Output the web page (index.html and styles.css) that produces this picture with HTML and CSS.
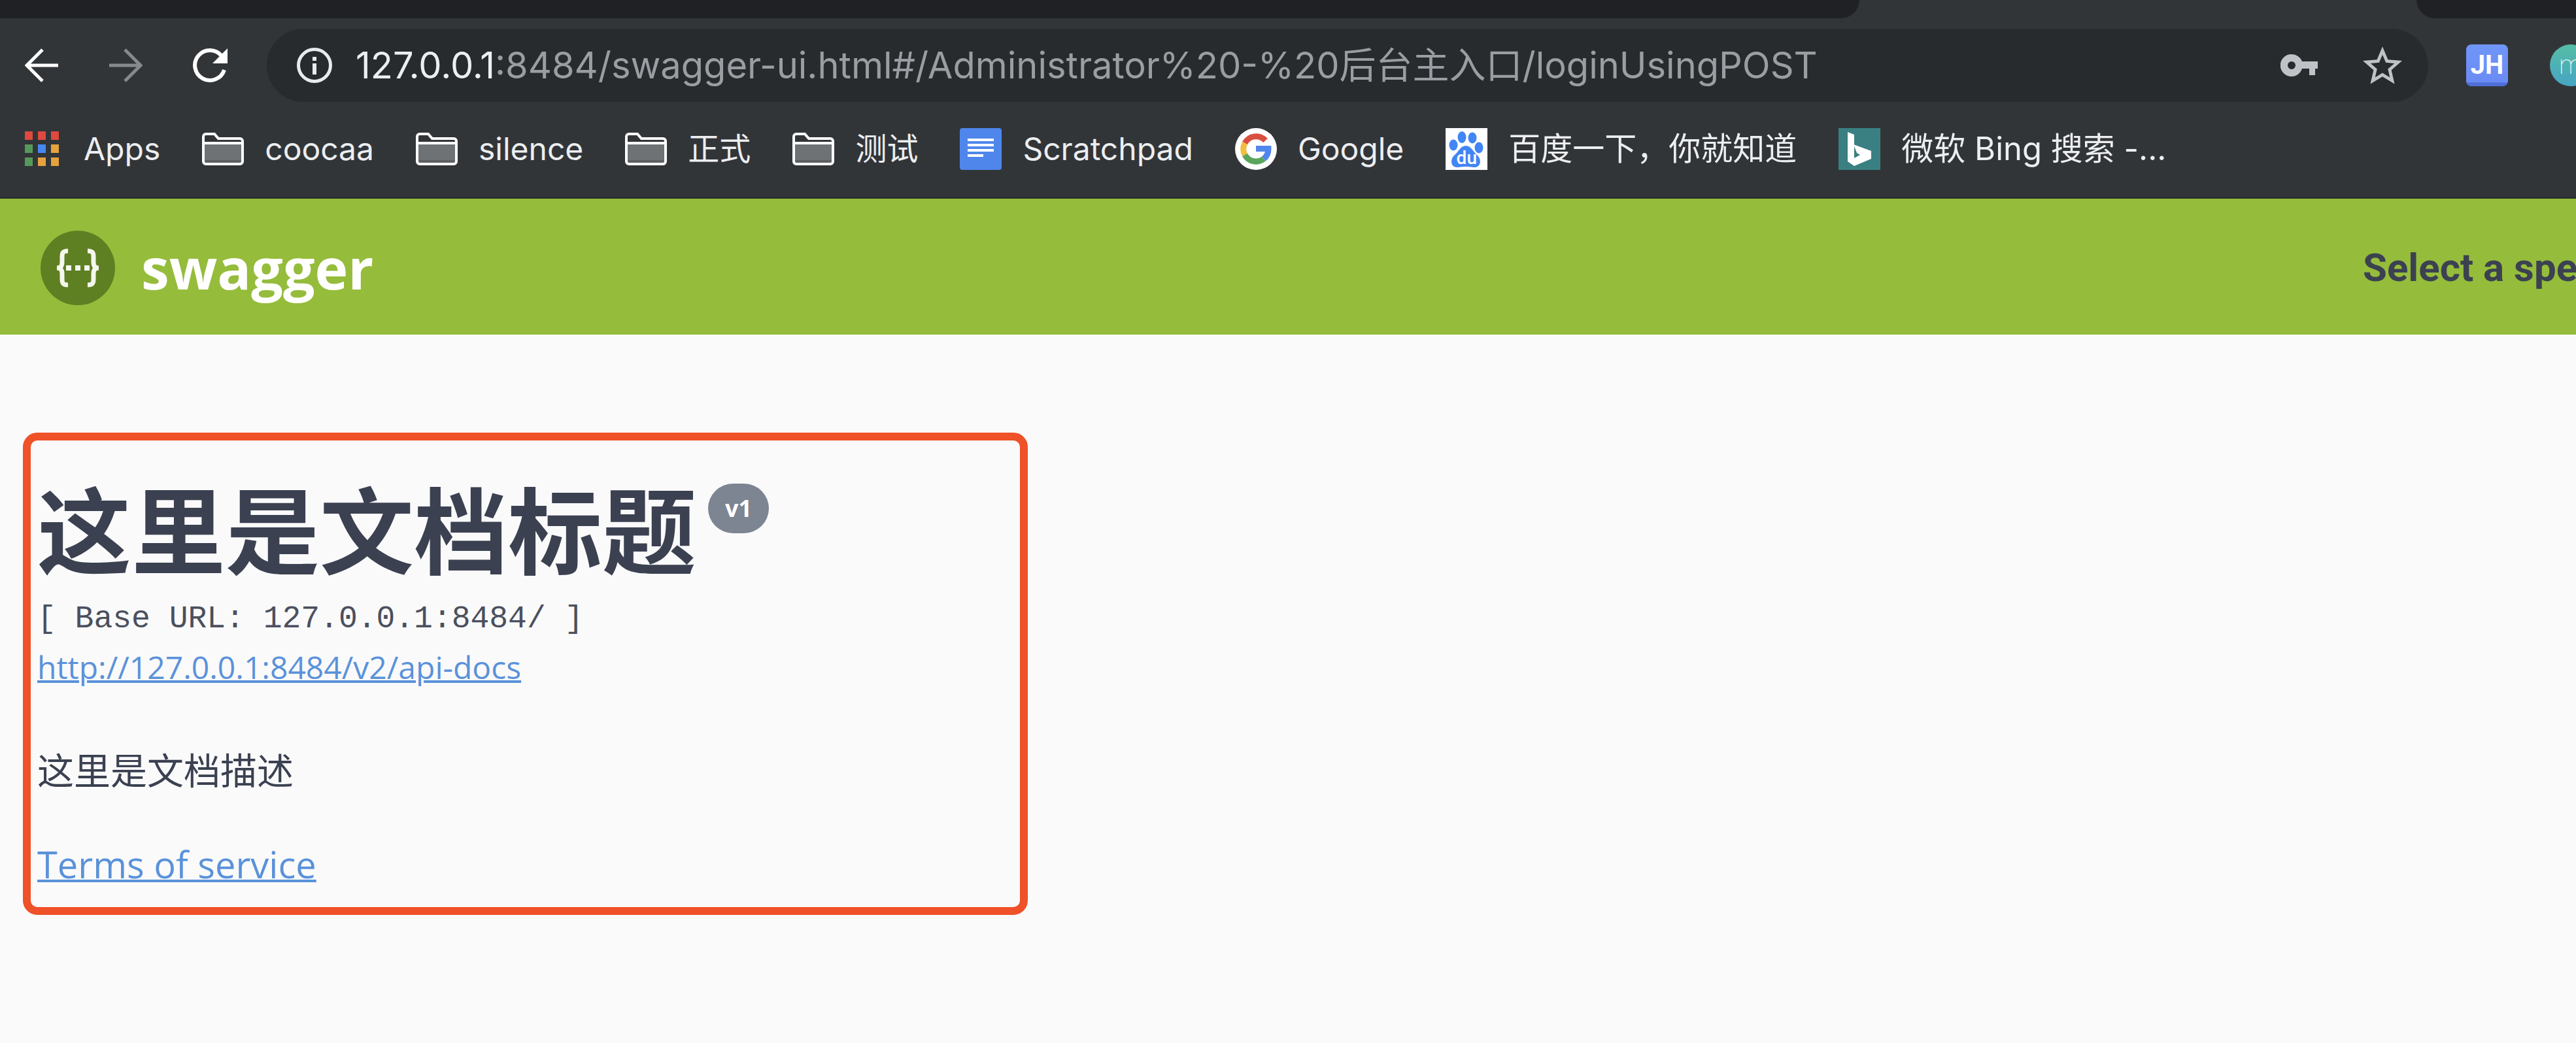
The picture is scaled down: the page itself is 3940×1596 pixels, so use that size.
FILE: index.html
```html
<!DOCTYPE html>
<html lang="zh-CN">
<head>
<meta charset="utf-8">
<title>Swagger UI</title>
<link rel="stylesheet" href="styles.css">
</head>
<body>
<svg width="0" height="0" class="defs" aria-hidden="true">
  <symbol id="folder" viewBox="0 0 64 50">
    <path d="M2 6a4 4 0 0 1 4-4h13l6 7h33a4 4 0 0 1 4 4v31a4 4 0 0 1-4 4H6a4 4 0 0 1-4-4z" fill="#323538"/>
    <path d="M3 17h58v30H3z" fill="#6f7274"/>
    <path d="M3 42h58v5H3z" fill="#5e6062"/>
    <path d="M2 6a4 4 0 0 1 4-4h13l6 7h33a4 4 0 0 1 4 4v31a4 4 0 0 1-4 4H6a4 4 0 0 1-4-4zM3 16h58" fill="none" stroke="#fff" stroke-width="4"/>
  </symbol>
</svg>
<header class="browser">
  <div class="tabs">
    <div class="tabs-before"></div>
    <div class="tab-active"></div>
    <div class="tabs-after"></div>
  </div>
  <div class="toolbar">
    <nav class="nav">
      <button type="button" aria-label="Back"><svg width="52" height="52" viewBox="0 0 52 52"><path d="M51 26H4M27 2L3 26l24 24" fill="none" stroke="#fff" stroke-width="5"/></svg></button>
      <button type="button" aria-label="Forward"><svg width="52" height="52" viewBox="0 0 52 52"><path d="M1 26h47M25 2l24 24-24 24" fill="none" stroke="#87898b" stroke-width="5"/></svg></button>
      <button type="button" aria-label="Reload"><svg width="54" height="54" viewBox="0 0 54 54"><path d="M45 12.500A23 23 0 1 0 49 34" fill="none" stroke="#fff" stroke-width="6"/><path d="M54 1v23H31z" fill="#fff"/></svg></button>
    </nav>
    <div class="omnibox">
      <svg width="54" height="54" viewBox="0 0 54 54"><circle cx="27" cy="27" r="24.500" fill="none" stroke="#e8eaed" stroke-width="5"/><path d="M24 14h6v6h-6zM24 24h6v17h-6z" fill="#e8eaed"/></svg>
      <div class="url"><b>127.0.0.1</b>:8484/swagger-ui.html#/Administrator%20-%20后台主入口/loginUsingPOST</div>
      <button type="button" aria-label="Passwords"><svg width="58" height="34" viewBox="0 0 58 34"><path d="M17 0a17 17 0 1 0 16 22h11v10h9V22h4V11H33A17 17 0 0 0 17 0zm0 11a6 6 0 1 1 0 12 6 6 0 0 1 0-12z" fill="#bfc2c6"/></svg></button>
      <button type="button" aria-label="Bookmark"><svg width="60" height="60" viewBox="0 0 24 24"><path d="M24 9.240l-8.630-.740L12 .500 8.630 8.500 0 9.240l6.550 5.680L4.580 23.400 12 18.900l7.420 4.500-1.970-8.480zM12 16.640l-4.510 2.720 1.200-5.130-3.980-3.450 5.250-.460L12 5.480l2.050 4.840 5.250.460-3.980 3.450 1.200 5.130z" fill="#bfc2c6"/></svg></button>
    </div>
    <div class="extensions">
      <button type="button" class="ext-jh">JH</button>
      <button type="button" class="ext-m">m</button>
    </div>
  </div>
  <nav class="bookmarks">
    <a href="#"><svg class="apps" width="52" height="54" viewBox="0 0 52 54"><g fill="#e0493e"><path d="M0 0h12v13H0zM20 0h12v13H20zM40 0h12v13H40z"/></g><path d="M0 20h12v13H0zM0 40h12v13H0z" fill="#569a5b"/><path d="M20 20h12v13H20z" fill="#4688f1"/><path d="M40 20h12v13H40zM20 40h12v13H20zM40 40h12v13H40z" fill="#e6a33c"/></svg>Apps</a>
    <a href="#"><svg width="64" height="50"><use href="#folder"/></svg>coocaa</a>
    <a href="#"><svg width="64" height="50"><use href="#folder"/></svg>silence</a>
    <a href="#"><svg width="64" height="50"><use href="#folder"/></svg>正式</a>
    <a href="#"><svg width="64" height="50"><use href="#folder"/></svg>测试</a>
    <a href="#"><svg width="64" height="64" viewBox="0 0 64 64"><rect width="64" height="64" rx="4" fill="#4f86ec"/><path d="M12 18h40M12 26h40M12 34h40M12 42h24" stroke="#fff" stroke-width="4"/></svg>Scratchpad</a>
    <a href="#"><svg width="64" height="64" viewBox="0 0 64 64"><circle cx="32" cy="32" r="32" fill="#fff"/><g fill="none" stroke-width="9"><path d="M46.500 19A19.500 19.500 0 0 0 15 23" stroke="#d94f3f"/><path d="M15 23a19.500 19.500 0 0 0 0 18" stroke="#f2bd42"/><path d="M15 41a19.500 19.500 0 0 0 29 6" stroke="#58a55c"/><path d="M44 47a19.500 19.500 0 0 0 7-15.500H32" stroke="#5186ec"/></g></svg>Google</a>
    <a href="#" class="zh"><span class="baidu"><svg width="64" height="64" viewBox="0 0 64 64"><rect width="64" height="64" fill="#fff"/><g fill="#4285f4"><ellipse cx="25" cy="14" rx="6.500" ry="9"/><ellipse cx="41" cy="15" rx="6.500" ry="8.500"/><ellipse cx="12" cy="26" rx="6.500" ry="8.500"/><ellipse cx="51" cy="30" rx="6.500" ry="8.500"/><path d="M31 27c8 0 11 9 17 14 7 6 7 18-3 19-6 0-8-1-14-1s-9 1-14 1c-10-1-10-13-3-19 6-5 9-14 17-14z"/></g></svg><span>du</span></span>百度一下，你就知道</a>
    <a href="#" class="zh"><svg width="64" height="64" viewBox="0 0 64 64"><rect width="64" height="64" fill="#3a8082"/><path d="M14 6l10 4v36l9-5-5-3-5-13 27 10v12L24 58l-10-7z" fill="#fff"/></svg>微软 Bing 搜索 -...</a>
  </nav>
</header>
<div class="topbar">
  <a class="brand" href="#">
    <svg width="114" height="116" viewBox="0 0 114 116"><circle cx="57" cy="58" r="57" fill="#5f7f23"/><g fill="none" stroke="#f4f7ee" stroke-width="7"><path d="M42 32c-8 0-9 3-9 9v8c0 6-2 9-8 9 6 0 8 3 8 9v8c0 6 1 9 9 9"/><path d="M72 32c8 0 9 3 9 9v8c0 6 2 9 8 9-6 0-8 3-8 9v8c0 6-1 9-9 9"/></g><path d="M39 54h8v8h-8zM53 54h8v8h-8zM67 54h8v8h-8z" fill="#f4f7ee"/></svg>
    <span>swagger</span>
  </a>
  <div class="spec">Select a spe</div>
</div>
<main class="page">
  <section class="info">
    <h1>这里是文档标题<span class="version">v1</span></h1>
    <pre class="base">[ Base URL: 127.0.0.1:8484/ ]</pre>
    <a class="docs" href="#">http://127.0.0.1:8484/v2/api-docs</a>
    <p>这里是文档描述</p>
    <a class="terms" href="#">Terms of service</a>
  </section>
</main>
</body>
</html>
```
FILE: styles.css
```css
* { box-sizing: border-box; }

body {
  margin: 0;
  background: #fafafa;
  color: #3b4151;
  font-family: "Open Sans", "Noto Sans CJK SC", sans-serif;
  overflow-x: hidden;
}

.defs { position: absolute; }
svg { display: block; flex: none; }

button {
  padding: 0;
  border: 0;
  background: none;
  flex: none;
}

/* Browser chrome */
.browser {
  background: #323538;
  border-bottom: 2px solid #2a2c2c;
  font-family: Inter, "Noto Sans CJK SC", sans-serif;
  overflow: hidden;
}

.tabs { display: flex; height: 28px; }
.tabs-before { flex: 1; background: #202124; border-bottom-right-radius: 28px; }
.tab-active { width: 852px; }
.tabs-after { width: 244px; background: #202124; border-bottom-left-radius: 28px; }

.toolbar {
  display: flex;
  align-items: center;
  gap: 58px;
  padding: 16px 0 0 38px;
}
.nav { display: flex; align-items: center; gap: 76px; padding-right: 2px; }

.omnibox {
  flex: 1;
  min-width: 0;
  display: flex;
  align-items: center;
  gap: 36px;
  height: 112px;
  padding: 0 40px 0 46px;
  border-radius: 56px;
  background: #282b2e;
}
.omnibox button + button { margin-left: 32px; }
.url {
  flex: 1;
  color: #9a9da1;
  font-size: 56px;
  line-height: 72px;
  white-space: nowrap;
  overflow: hidden;
}
.url b { color: #eceef0; font-weight: 400; }

.extensions { display: flex; gap: 64px; }
.ext-jh, .ext-m { width: 64px; height: 64px; color: #fff; text-align: center; }
.ext-jh {
  border-radius: 8px;
  background: linear-gradient(#7096f8, #6a8bf5 90%, #4e6fd8 92%);
  font: 700 40px/64px Roboto, sans-serif;
}
.ext-m {
  margin-right: -24px;
  border-radius: 50%;
  background: linear-gradient(#55bda5, #47a5c4);
  font: 100 40px/64px Roboto, sans-serif;
}

.bookmarks {
  display: flex;
  align-items: center;
  gap: 64px;
  height: 146px;
  padding: 0 0 2px 38px;
}
.bookmarks a {
  display: flex;
  align-items: center;
  gap: 32px;
  color: #eceef0;
  font-size: 48px;
  line-height: 64px;
  text-decoration: none;
  white-space: nowrap;
}
.bookmarks .zh { font-size: 49px; }
.apps { margin-right: 6px; }
.baidu { position: relative; }
.baidu span {
  position: absolute;
  inset: 32px 0 0;
  color: #fff;
  font: 500 28px/28px Roboto, sans-serif;
  text-align: center;
}

/* Swagger top bar */
.topbar {
  display: flex;
  align-items: center;
  justify-content: space-between;
  height: 208px;
  padding: 4px 0 0 62px;
  background: #95bc3b;
}
.brand {
  display: flex;
  align-items: center;
  gap: 40px;
  color: #fff;
  font-size: 86px;
  font-weight: 700;
  line-height: 116px;
  text-decoration: none;
}
.spec {
  width: 326px;
  overflow: hidden;
  font: 700 60px/80px Roboto, sans-serif;
  white-space: nowrap;
}

/* API information */
.page { padding: 150px 35px; }
.info {
  display: flex;
  flex-direction: column;
  align-items: flex-start;
  max-width: 1537px;
  padding: 52px 10px 26px;
  border: 12px solid #ef5128;
  border-radius: 22px;
}
h1 {
  display: flex;
  align-items: flex-start;
  gap: 18px;
  margin: 0 0 10px;
  font-size: 144px;
  line-height: 172px;
}
.version {
  margin-top: 14px;
  padding: 0 26px;
  border-radius: 38px;
  background: #7d8492;
  color: #fff;
  font-size: 36px;
  line-height: 76px;
}
.base {
  margin: 0;
  color: #4b505e;
  font: 48px/78px "Liberation Mono", monospace;
}
.info a { color: #5a92da; text-decoration-thickness: 4px; }
.docs { font-size: 48px; line-height: 70px; }
.info p { margin: 82px 0 64px; font-size: 56px; line-height: 80px; }
.terms { font-size: 56px; line-height: 80px; }
```
